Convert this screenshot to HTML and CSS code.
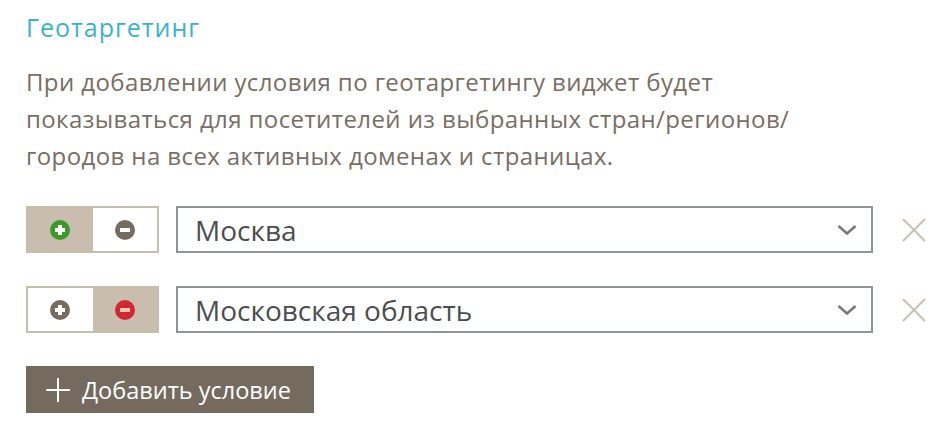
FILE: index.html
```html
<!DOCTYPE html>
<html>
    <head>
        <title>Геотаргетинг</title>
        <meta charset="utf-8">
        <link rel="stylesheet" href="styles.css">
    </head>
    <body>
        <div class="geo">
            <h2 class="geo-title">Геотаргетинг</h2>
            <p class="geo-text">При добавлении условия по геотаргетингу виджет будет показываться для посетителей из выбранных стран/регионов/ городов на всех активных доменах и страницах.</p>

            <div class="rule">
                <div class="toggle">
                    <span class="toggle-btn active">
                        <svg width="20" height="20" viewBox="0 0 20 20"><circle cx="10" cy="10" r="10" fill="#3a9a2a"/><rect x="5" y="8" width="10" height="4" fill="#fff"/><rect x="8" y="5" width="4" height="10" fill="#fff"/></svg>
                    </span>
                    <span class="toggle-btn">
                        <svg width="20" height="20" viewBox="0 0 20 20"><circle cx="10" cy="10" r="10" fill="#766b5f"/><rect x="5" y="8" width="10" height="4" fill="#fff"/></svg>
                    </span>
                </div>
                <div class="select">
                    <span class="select-value">Москва</span>
                    <svg class="chevron" width="20" height="12" viewBox="0 0 20 12"><polyline points="1.5,2 10,9.5 18.5,2" fill="none" stroke="#777a7b" stroke-width="2.6"/></svg>
                </div>
                <svg class="remove" width="24" height="24" viewBox="0 0 24 24"><path d="M1 1 L23 23 M23 1 L1 23" stroke="#cbbfb0" stroke-width="2"/></svg>
            </div>

            <div class="rule">
                <div class="toggle">
                    <span class="toggle-btn">
                        <svg width="20" height="20" viewBox="0 0 20 20"><circle cx="10" cy="10" r="10" fill="#766b5f"/><rect x="5" y="8" width="10" height="4" fill="#fff"/><rect x="8" y="5" width="4" height="10" fill="#fff"/></svg>
                    </span>
                    <span class="toggle-btn active">
                        <svg width="20" height="20" viewBox="0 0 20 20"><circle cx="10" cy="10" r="10" fill="#d22630"/><rect x="5" y="8" width="10" height="4" fill="#e8c9b4"/></svg>
                    </span>
                </div>
                <div class="select">
                    <span class="select-value">Московская область</span>
                    <svg class="chevron" width="20" height="12" viewBox="0 0 20 12"><polyline points="1.5,2 10,9.5 18.5,2" fill="none" stroke="#777a7b" stroke-width="2.6"/></svg>
                </div>
                <svg class="remove" width="24" height="24" viewBox="0 0 24 24"><path d="M1 1 L23 23 M23 1 L1 23" stroke="#cbbfb0" stroke-width="2"/></svg>
            </div>

            <button class="add-btn">
                <svg width="24" height="24" viewBox="0 0 24 24"><path d="M0 12 H24 M12 0 V24" stroke="#fff" stroke-width="2"/></svg>
                Добавить условие
            </button>
        </div>
    </body>
</html>
```

FILE: styles.css
```css
body {
    margin: 0;
    background: #fff;
    font-family: "Open Sans", "Noto Sans", sans-serif;
}

.geo {
    padding: 12px 0 12px 26px;
}

.geo-title {
    margin: 0;
    font-size: 25px;
    font-weight: normal;
    letter-spacing: 1px;
    color: #3bb2cd;
    line-height: 31px;
}

.geo-text {
    margin: 20px 0 0 0;
    width: 800px;
    font-size: 24px;
    letter-spacing: 0.4px;
    line-height: 37px;
    color: #796e63;
}

.rule {
    display: flex;
    align-items: center;
    margin-top: 32px;
}

.rule + .rule {
    margin-top: 33px;
}

.toggle {
    display: flex;
    flex-shrink: 0;
    width: 133px;
    height: 47px;
    box-sizing: border-box;
    border: 2px solid #c9bdad;
}

.toggle-btn {
    flex: 1;
    display: flex;
    align-items: center;
    justify-content: center;
    background: #fff;
}

.toggle-btn.active {
    background: #c9bdad;
}

.select {
    display: flex;
    flex-shrink: 0;
    align-items: center;
    justify-content: space-between;
    width: 697px;
    height: 47px;
    box-sizing: border-box;
    margin-left: 17px;
    padding: 0 14px 0 17px;
    border: 2px solid #8f9496;
}

.select-value {
    font-size: 28px;
    color: #4a4e50;
}

.remove {
    flex-shrink: 0;
    margin-left: 29px;
}

.add-btn {
    display: flex;
    align-items: center;
    gap: 12px;
    margin-top: 33px;
    height: 47px;
    width: 288px;
    padding: 0 20px;
    border: none;
    background: #756a5e;
    color: #fff;
    font-family: "Open Sans", "Noto Sans", sans-serif;
    font-size: 23.5px;
}
```
